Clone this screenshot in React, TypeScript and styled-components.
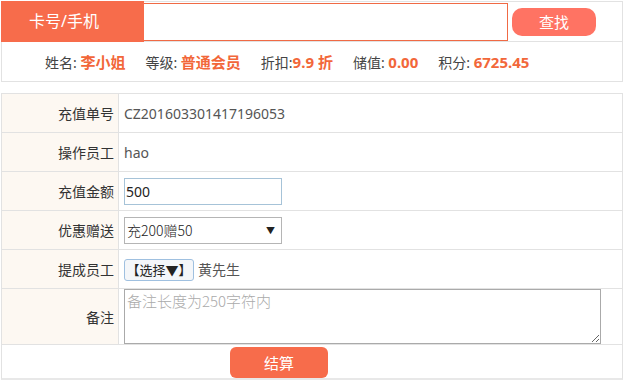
import React from "react";
import styled, { createGlobalStyle } from "styled-components";

const GlobalStyle = createGlobalStyle`
  *, *::before, *::after {
    box-sizing: border-box;
  }
  body {
    margin: 0;
    background: #fff;
    font-family: "Noto Sans", "Noto Sans CJK SC", sans-serif;
    font-size: 14px;
    color: #333;
  }
`;

const Wrapper = styled.div`
  width: 622px;
  margin: 1px 0 0 1px;
`;

const SearchBar = styled.div`
  display: flex;
  align-items: center;
  height: 40px;
  border-top: 1px solid #e2e2e2;
  border-right: 1px solid #e2e2e2;
`;

const SearchLabel = styled.div`
  width: 143px;
  height: 41px;
  margin-top: -1px;
  padding-left: 28px;
  background: #f76c4b;
  color: #fff;
  font-size: 16px;
  line-height: 40px;
`;

const SearchInput = styled.input`
  width: 364px;
  height: 38px;
  margin-top: 1px;
  border: 1px solid #f06a45;
  border-left: none;
  outline: none;
  font-size: 14px;
  padding: 0 8px;
`;

const Button = styled.button<{ $tone?: string }>`
  border: none;
  border-radius: 10px;
  background: ${(p) => p.$tone || "#f76c4b"};
  color: #fff;
  font-family: "Noto Sans CJK SC", sans-serif;
  font-size: 15px;
  cursor: pointer;
`;

const SearchButton = styled(Button)`
  width: 84px;
  height: 28px;
  margin-left: 4px;
`;

const InfoBar = styled.div`
  display: flex;
  align-items: center;
  gap: 20px;
  height: 41px;
  padding-left: 43px;
  border: 1px solid #e2e2e2;
  color: #444;
`;

const InfoItem = styled.span``;

const InfoValue = styled.b`
  color: #f2673a;
  font-weight: 700;
  font-size: 15px;
`;

const Table = styled.div`
  margin-top: 11px;
  border: 1px solid #e2e2e2;
  border-bottom: 2px solid #e8e8e8;
`;

const Row = styled.div<{ $h?: number }>`
  display: grid;
  grid-template-columns: 117px 1fr;
  height: ${(p) => p.$h || 39}px;
  border-bottom: 1px solid #e2e2e2;
`;

const Label = styled.div`
  background: #fdf8f2;
  border-right: 1px solid #e2e2e2;
  display: flex;
  align-items: center;
  justify-content: flex-end;
  padding-right: 4px;
  color: #333;
`;

const Cell = styled.div`
  display: flex;
  align-items: center;
  gap: 4px;
  padding-left: 5px;
  color: #555;
`;

const TextInput = styled.input`
  width: 158px;
  height: 27px;
  border: 1px solid #a6c3d8;
  padding: 0 1px;
  font-size: 14px;
  font-family: "Noto Sans", sans-serif;
  color: #222;
  outline: none;
`;

const FakeSelect = styled.div`
  width: 158px;
  height: 27px;
  border: 1px solid #b5b5b5;
  display: flex;
  align-items: center;
  justify-content: space-between;
  padding: 0 6px 0 2px;
  font-family: "Noto Sans CJK SC", sans-serif;
  font-weight: 300;
  font-size: 14px;
  color: #222;
`;

const Arrow = styled.span`
  font-size: 9px;
`;

const ChooseButton = styled.button`
  width: 70px;
  height: 22px;
  padding: 0;
  border: 1px solid #9fc0e0;
  border-radius: 3px;
  background: #f4f6f9;
  font-family: "Noto Sans CJK SC", sans-serif;
  font-size: 13px;
  color: #222;
  margin-top: 1px;
  white-space: nowrap;
`;

const TextArea = styled.textarea`
  width: 477px;
  height: 55px;
  border: 1px solid #aaa;
  font-family: "Noto Sans CJK SC", monospace;
  font-weight: 300;
  font-size: 15px;
  padding: 0 2px;
  resize: both;
  &::placeholder {
    color: #aaa;
  }
`;

const TopCell = styled(Cell)`
  align-items: flex-start;
`;

const FooterRow = styled.div`
  display: flex;
  justify-content: center;
  height: 33px;
  padding-top: 2px;
  padding-right: 66px;
`;

const SubmitButton = styled(Button)`
  width: 98px;
  height: 31px;
  border-radius: 6px;
`;

export default function App() {
  return (
    <>
      <GlobalStyle />
      <Wrapper>
        <SearchBar>
          <SearchLabel>卡号/手机</SearchLabel>
          <SearchInput />
          <SearchButton $tone="#ff7363">查找</SearchButton>
        </SearchBar>
        <InfoBar>
          <InfoItem>
            姓名: <InfoValue>李小姐</InfoValue>
          </InfoItem>
          <InfoItem>
            等级: <InfoValue>普通会员</InfoValue>
          </InfoItem>
          <InfoItem>
            折扣:<InfoValue>9.9 折</InfoValue>
          </InfoItem>
          <InfoItem>
            储值: <InfoValue>0.00</InfoValue>
          </InfoItem>
          <InfoItem>
            积分: <InfoValue>6725.45</InfoValue>
          </InfoItem>
        </InfoBar>
        <Table>
          <Row>
            <Label>充值单号</Label>
            <Cell>CZ201603301417196053</Cell>
          </Row>
          <Row>
            <Label>操作员工</Label>
            <Cell>hao</Cell>
          </Row>
          <Row>
            <Label>充值金额</Label>
            <Cell>
              <TextInput defaultValue="500" />
            </Cell>
          </Row>
          <Row>
            <Label>优惠赠送</Label>
            <Cell>
              <FakeSelect>
                <span>充200赠50</span>
                <Arrow>▼</Arrow>
              </FakeSelect>
            </Cell>
          </Row>
          <Row>
            <Label>提成员工</Label>
            <Cell>
              <ChooseButton>【选择▼】</ChooseButton>
              <span>黄先生</span>
            </Cell>
          </Row>
          <Row $h={56}>
            <Label>备注</Label>
            <TopCell>
              <TextArea placeholder="备注长度为250字符内" />
            </TopCell>
          </Row>
          <FooterRow>
            <SubmitButton>结算</SubmitButton>
          </FooterRow>
        </Table>
      </Wrapper>
    </>
  );
}
